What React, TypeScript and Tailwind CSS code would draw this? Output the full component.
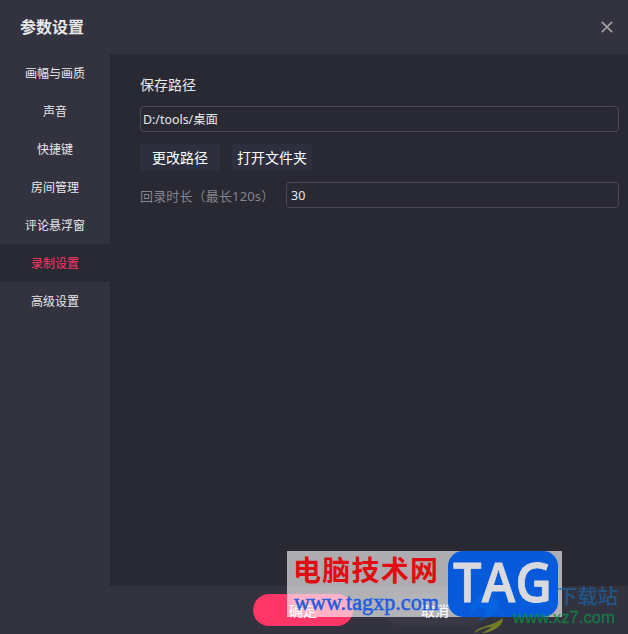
import React, { useState } from 'react';

const tabs = ['画幅与画质', '声音', '快捷键', '房间管理', '评论悬浮窗', '录制设置', '高级设置'];

const Watermark: React.FC = () => (
  <svg
    className="absolute left-[287px] top-[551px] pointer-events-none"
    width="341"
    height="83"
    viewBox="0 0 341 83"
  >
    <rect width="275" height="66" fill="#ffffff" fillOpacity="0.62" />
    <text x="6" y="30" fontSize="28" fontWeight="700" fill="#e00d12" textLength="145" fontFamily="Noto Sans CJK SC, sans-serif">
      电脑技术网
    </text>
    <text x="7" y="59" fontSize="23.5" fill="#1c5be0" stroke="#1c5be0" strokeWidth="0.5" textLength="145" lengthAdjust="spacingAndGlyphs" fontFamily="Liberation Serif, serif">
      www.tagxp.com
    </text>
    <rect x="161" width="110" height="66" rx="15" fill="#075bdb" />
    <path d="M184 68 C178 49 198 39 216 36 C204 42 202 46 209 49 C218 54 208 66 190 71 C203 61 202 56 193 57 C186 58 183 62 184 68Z" fill="#0b70ee" fillOpacity="0.4" />
    <path d="M187 82 C191 75 204 76 216 67 C216 76 203 82 195 82 L205 76 C198 76 193 79 187 82Z" fill="#9aa51c" fillOpacity="0.65" />
    <text x="230" y="53" fontSize="21" fontWeight="500" fill="#0b70ee" fillOpacity="0.3" fontFamily="Noto Sans CJK SC, sans-serif">
      极光
    </text>
    <text x="166" y="51" fontSize="55" fontWeight="600" fill="#dadade" stroke="#dadade" strokeWidth="0.8" textLength="99" lengthAdjust="spacingAndGlyphs" fontFamily="Open Sans, sans-serif">
      TAG
    </text>
    <text x="270" y="53" fontSize="20.5" fontWeight="500" fill="#176bb5" fillOpacity="0.65" textLength="61" fontFamily="Noto Sans CJK SC, sans-serif">
      下载站
    </text>
    <text x="226" y="72" fontSize="16.5" fill="#0c8f48" fillOpacity="0.75" stroke="#0c8f48" strokeOpacity="0.6" strokeWidth="0.4" textLength="102" lengthAdjust="spacingAndGlyphs" fontFamily="Liberation Sans, sans-serif">
      www.xz7.com
    </text>
  </svg>
);

export default function App() {
  const [active, setActive] = useState(5);
  const [duration, setDuration] = useState('30');

  return (
    <div className="relative flex h-[634px] w-[628px] flex-col overflow-hidden bg-[#33323f] font-['Noto_Sans','Noto_Sans_CJK_SC',sans-serif] text-[#e8e8ea]">
      <header className="flex h-[54px] shrink-0 items-center justify-between pl-5 pr-[15px]">
        <h1 className="text-base font-bold">参数设置</h1>
        <button aria-label="关闭">
          <svg width="12" height="12" viewBox="0 0 12 12" fill="none" stroke="#a0a09f" strokeWidth="1.7">
            <path d="M0.8 0.8 11.2 11.2M11.2 0.8 0.8 11.2" />
          </svg>
        </button>
      </header>

      <div className="flex h-[532px] shrink-0">
        <nav className="w-[110px] shrink-0">
          {tabs.map((tab, i) => (
            <button
              key={tab}
              onClick={() => setActive(i)}
              className={`flex h-[38px] w-full items-center justify-center pt-0.5 text-xs ${i === active ? 'bg-[#292933] text-[#fe3666]' : ''}`}
            >
              {tab}
            </button>
          ))}
        </nav>

        <main className="flex-1 bg-[#292933] pl-[30px] pr-[9px] pt-[21px]">
          <div className="h-5 text-sm leading-5">保存路径</div>
          <input
            readOnly
            value="D:/tools/桌面"
            className="mt-[11px] block h-[26px] w-full rounded border border-[#4a4954] bg-transparent px-[2px] text-[12.4px] outline-none"
          />
          <div className="mt-3 flex gap-3 text-sm text-white">
            <button className="h-[26px] w-20 bg-[#2d2f3e] pt-0.5">更改路径</button>
            <button className="h-[26px] w-20 bg-[#2d2f3e] pt-0.5">打开文件夹</button>
          </div>
          <div className="mt-3 flex items-center">
            <label className="w-[146px] shrink-0 whitespace-nowrap pt-[3px] text-[13px] tracking-[0.15px] text-[#85858f]">回录时长（最长120s）</label>
            <input
              value={duration}
              onChange={e => setDuration(e.target.value)}
              className="h-[26px] min-w-0 flex-1 rounded border border-[#4a4954] bg-transparent px-1 text-[12.5px] outline-none"
            />
          </div>
        </main>
      </div>

      <footer className="flex h-12 shrink-0 items-center gap-8 pl-[253px] text-sm text-white">
        <button className="h-8 w-[100px] rounded-full bg-[#ff3666] pt-0.5">确定</button>
        <button className="h-8 w-[100px] rounded-full bg-[#393846] pt-0.5">取消</button>
      </footer>

      <Watermark />
    </div>
  );
}
